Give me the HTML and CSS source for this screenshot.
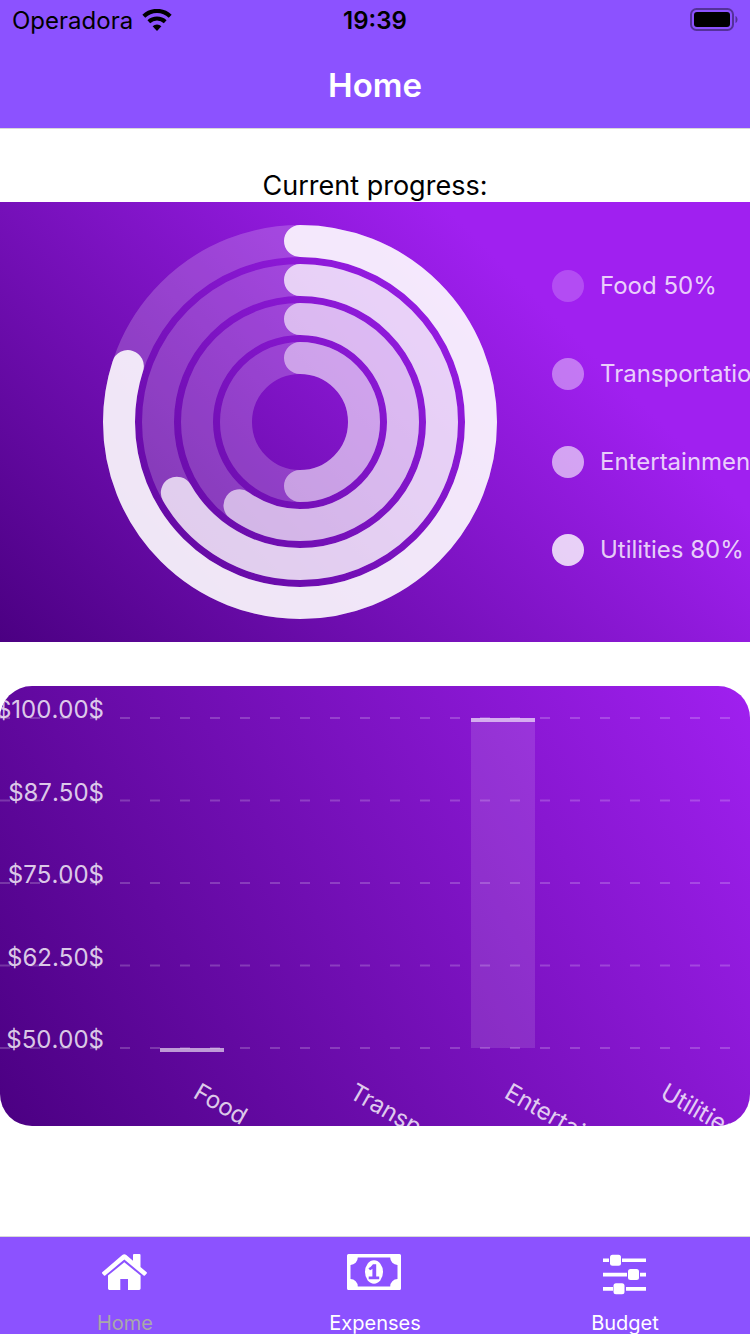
FILE: index.html
```html
<!DOCTYPE html>
<html lang="en">
<head>
<meta charset="utf-8">
<meta name="viewport" content="width=device-width, initial-scale=1">
<title>Home</title>
<link rel="stylesheet" href="styles.css">
</head>
<body>
<div class="app">
  <header class="header">
    <div class="status">
      <div class="status-left">
        <span>Operadora</span>
        <svg class="wifi" viewBox="0 0 30 24" aria-hidden="true">
          <path d="M1.800 7.200A19.200 19.200 0 0 1 28.200 7.200" fill="none" stroke="#000" stroke-width="4.200"/>
          <path d="M6.800 12.800A12 12 0 0 1 23.200 12.800" fill="none" stroke="#000" stroke-width="4"/>
          <path d="M10.600 17.200a6.400 6.400 0 0 1 8.800 0L15 22z"/>
        </svg>
      </div>
      <time class="status-time">19:39</time>
      <div class="status-right">
        <svg class="battery" viewBox="0 0 48 26" aria-hidden="true">
          <rect x="1" y="1" width="42" height="21" rx="5.500" fill="none" stroke="#000" stroke-opacity=".4" stroke-width="2"/>
          <rect x="4" y="4" width="36" height="15" rx="3"/>
          <path d="M45.500 8c2.700 1 2.700 6 0 7z" fill-opacity=".4"/>
        </svg>
      </div>
    </div>
    <h1 class="title">Home</h1>
  </header>

  <main class="content">
    <h2 class="caption">Current progress:</h2>

    <section class="progress">
      <svg class="chart" viewBox="0 0 750 440" role="img" aria-label="Progress by category">
        <g class="tracks" transform="translate(300 220) rotate(-90)">
          <circle r="64"/><circle r="103"/><circle r="142"/><circle r="181"/>
        </g>
        <g class="rings" transform="translate(300 220) rotate(-90)">
          <circle r="64" pathLength="100" stroke-dasharray="50 100" stroke-opacity=".5"/>
          <circle r="103" pathLength="100" stroke-dasharray="60 100" stroke-opacity=".625"/>
          <circle r="142" pathLength="100" stroke-dasharray="66.700 100" stroke-opacity=".75"/>
          <circle r="181" pathLength="100" stroke-dasharray="80 100" stroke-opacity=".875"/>
        </g>
        <g class="legend-dots">
          <circle cx="568" cy="84" r="16" fill-opacity=".2"/>
          <circle cx="568" cy="172" r="16" fill-opacity=".4"/>
          <circle cx="568" cy="260" r="16" fill-opacity=".6"/>
          <circle cx="568" cy="348" r="16" fill-opacity=".8"/>
        </g>
        <g class="labels">
          <text x="600" y="92">Food 50%</text>
          <text x="600" y="180">Transportation 60%</text>
          <text x="600" y="268">Entertainment 67%</text>
          <text x="600" y="356">Utilities 80%</text>
        </g>
      </svg>
    </section>

    <section class="bars">
      <svg class="chart" viewBox="0 0 750 440" role="img" aria-label="Spending by category">
        <g class="grid">
          <path d="M0 32H750"/><path d="M0 114.500H750"/><path d="M0 197H750"/><path d="M0 279.500H750"/><path d="M0 362H750"/>
        </g>
        <g class="labels labels-end">
          <text x="104" y="32">$100.00$</text>
          <text x="104" y="115">$87.50$</text>
          <text x="104" y="197">$75.00$</text>
          <text x="104" y="280">$62.50$</text>
          <text x="104" y="362">$50.00$</text>
        </g>
        <g class="labels">
          <text transform="translate(192 411) rotate(30)">Food</text>
          <text transform="translate(348 411) rotate(30)">Transportation</text>
          <text transform="translate(503 411) rotate(30)">Entertainment</text>
          <text transform="translate(659 411) rotate(30)">Utilities</text>
        </g>
        <rect class="bar" x="471" y="32" width="64" height="330"/>
        <rect class="bar-top" x="471" y="32" width="64" height="4"/>
        <rect class="bar-top" x="160" y="362" width="64" height="4"/>
      </svg>
    </section>
  </main>

  <nav class="tabs">
    <a class="tab tab-active" href="#home" aria-current="page">
      <svg class="icon" viewBox="0 0 48 38" aria-hidden="true">
        <path fill="#fff" d="M1.200 19.300 21.300 2q2-1.500 4 0L32 7.800V2q0-1 1-1h5.500q1 0 1 1v12L45.700 19.300q.5.600 0 1.200l-1.800 2q-.6.500-1.300 0L23.300 6.600 4.200 22.500q-.6.500-1.200 0l-1.800-2q-.5-.6 0-1.200z"/>
        <path fill="#fff" d="M23.300 9.200 39.600 22.600V35.600q0 1.400-1.400 1.400H27V26h-7.700V37H8.400Q7 37 7 35.600V22.600z"/>
      </svg>
      <span>Home</span>
    </a>
    <a class="tab" href="#expenses">
      <svg class="icon icon-wide" viewBox="0 0 58 38" aria-hidden="true">
        <path fill="#fff" fill-rule="evenodd" d="M2.500 1h51q1.500 0 1.500 1.500v33q0 1.500-1.500 1.500h-51Q1 37 1 35.500v-33Q1 1 2.500 1zM11.800 4.600a7.300 7.300 0 0 1-7.300 7.300v14.200a7.300 7.300 0 0 1 7.300 7.300h32.400a7.300 7.300 0 0 1 7.300-7.300V11.900a7.300 7.300 0 0 1-7.300-7.300z"/>
        <ellipse fill="#fff" cx="28" cy="19" rx="9" ry="11.700"/>
        <path fill="#8c52ff" d="M27 11.300h3.200v12.200h3v2.700H22.700v-2.700h3.700v-7.800q-1.200 1.300-2.400 1.600l-1.600-2.100q2.800-1.200 4.600-3.900z"/>
      </svg>
      <span>Expenses</span>
    </a>
    <a class="tab" href="#budget">
      <svg class="icon icon-sliders" viewBox="0 0 44 42" aria-hidden="true">
        <g fill="#fff">
          <path d="M0 5.500h6v3.600H0zM19 5.500h24v3.600H19zM0 19.800h24v3.600H0zM37 19.800h6v3.600h-6zM0 34.100h10v3.600H0zM23 34.100h20v3.600H23z"/>
          <rect x="7" y="1.700" width="11" height="11" rx="2.500"/>
          <rect x="25" y="16" width="11" height="11" rx="2.500"/>
          <rect x="10.500" y="30.300" width="11" height="11" rx="2.500"/>
        </g>
      </svg>
      <span>Budget</span>
    </a>
  </nav>
</div>
</body>
</html>
```
FILE: styles.css
```css
* {
  box-sizing: border-box;
}

body {
  margin: 0;
  background: #fff;
  color: #000;
  font-family: Inter, "Liberation Sans", sans-serif;
}

.app {
  display: flex;
  flex-direction: column;
  min-height: 100vh;
}

.header {
  background: #8c52ff;
  border-bottom: 1px solid #d8d8d8;
}

.status {
  display: grid;
  grid-template-columns: 1fr auto 1fr;
  align-items: center;
  height: 42px;
  padding: 0 12px;
  font-size: 24px;
  line-height: 42px;
}

.status-left {
  display: flex;
  align-items: center;
  gap: 9px;
}

.status-time {
  font-weight: 600;
}

.status-right {
  display: flex;
  justify-content: flex-end;
}

.wifi {
  width: 30px;
  height: 24px;
}

.battery {
  width: 48px;
  height: 26px;
}

.title {
  margin: 0;
  color: #fff;
  font-size: 33px;
  font-weight: 600;
  line-height: 86px;
  text-align: center;
}

.content {
  flex: 1;
}

.caption {
  margin: 0;
  padding-top: 41px;
  font-size: 27px;
  font-weight: 400;
  line-height: 32px;
  text-align: center;
}

.progress {
  background: linear-gradient(45deg, #4b0082, #a020f0 74%);
}

.bars {
  margin: 44px 0;
  overflow: hidden;
  border-radius: 32px;
  background: linear-gradient(60deg, #4b0082, #a020f0);
}

.chart {
  display: block;
  width: 100%;
}

.tracks,
.rings {
  fill: none;
  stroke: #fff;
  stroke-width: 32px;
}

.tracks {
  stroke-opacity: 0.2;
}

.rings {
  stroke-linecap: round;
}

.legend-dots {
  fill: #fff;
}

.labels {
  fill: #fff;
  fill-opacity: 0.8;
  font-size: 24px;
}

.labels-end {
  font-kerning: none;
  text-anchor: end;
}

.grid {
  stroke: #fff;
  stroke-opacity: 0.2;
  stroke-width: 2px;
  stroke-dasharray: 10 20;
}

.bar {
  fill: #fff;
  fill-opacity: 0.12;
}

.bar-top {
  fill: #fff;
  fill-opacity: 0.6;
}

.tabs {
  display: grid;
  grid-template-columns: repeat(3, 1fr);
  height: 98px;
  border-top: 1px solid #d8d8d8;
  background: #8c52ff;
}

.tab {
  display: flex;
  flex-direction: column;
  align-items: center;
  justify-content: space-between;
  padding-top: 16px;
  color: #fff;
  font-size: 20px;
  line-height: 22px;
  text-decoration: none;
}

.tab-active {
  color: #a9a9a9;
}

.icon {
  width: 48px;
  height: 38px;
}

.icon-wide {
  width: 58px;
}

.icon-sliders {
  width: 44px;
  height: 42px;
}
```
